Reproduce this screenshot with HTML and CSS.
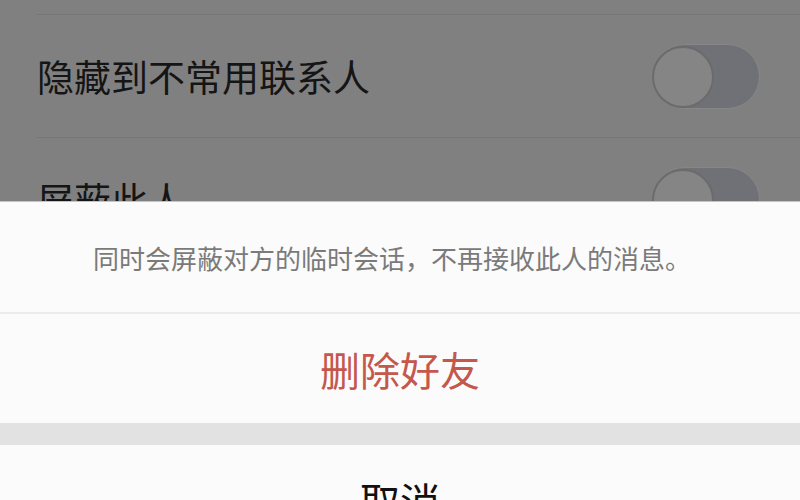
FILE: index.html
```html
<!DOCTYPE html>
<html lang="zh-CN">
<head>
  <meta charset="UTF-8">
  <meta name="viewport" content="width=device-width, initial-scale=1.0">
  <title>聊天设置</title>
  <link rel="stylesheet" href="styles.css">
</head>
<body>
  <div class="settings">
    <div class="setting-row setting-top"></div>
    <div class="setting-row">
      <span class="setting-label">隐藏到不常用联系人</span>
      <span class="switch"><span class="knob"></span></span>
    </div>
    <div class="setting-row">
      <span class="setting-label">屏蔽此人</span>
      <span class="switch"><span class="knob"></span></span>
    </div>
  </div>

  <div class="action-sheet">
    <div class="sheet-message">同时会屏蔽对方的临时会话，不再接收此人的消息。</div>
    <div class="sheet-action danger">删除好友</div>
    <div class="sheet-gap"></div>
    <div class="sheet-action">取消</div>
  </div>
</body>
</html>
```

FILE: styles.css
```css
body {
  font-family: "Noto Sans CJK SC", "Noto Sans", sans-serif;
  margin: 0;
  padding: 0;
  width: 800px;
  height: 500px;
  overflow: hidden;
  background: #808080;
  display: flex;
  flex-direction: column;
}

/* dimmed settings list, cut off by the sheet */
.settings {
  height: 201px;
  flex-shrink: 0;
  overflow: hidden;
  padding-left: 36px;
}
.setting-row {
  height: 122px;
  display: flex;
  align-items: center;
  justify-content: space-between;
  padding-right: 40px;
  border-bottom: 1px solid #777;
}
.setting-top {
  height: 14px;
}
.setting-label {
  font-size: 37px;
  color: #151515;
  padding-left: 1px;
}
.switch {
  width: 108px;
  height: 65px;
  box-sizing: border-box;
  border-radius: 33px;
  background: #707176;
  border: 1px solid #878787;
  position: relative;
}
.knob {
  position: absolute;
  left: -1px;
  top: 1px;
  width: 62px;
  height: 62px;
  box-sizing: border-box;
  border-radius: 50%;
  background: #858585;
  border: 2px solid #6b6b6b;
}

.action-sheet {
  flex-shrink: 0;
  background: #fbfbfb;
  border-top: 1px solid #c4c4c4;
}
.sheet-message {
  height: 110px;
  display: flex;
  align-items: center;
  justify-content: center;
  padding-right: 16px;
  font-size: 26px;
  color: #7a7a7a;
  border-bottom: 2px solid #ebebeb;
}
.sheet-action {
  height: 109px;
  display: flex;
  align-items: center;
  justify-content: center;
  font-size: 40px;
  color: #111;
}
.sheet-action.danger {
  color: #c4584c;
}
.sheet-gap {
  height: 22px;
  background: #e2e2e2;
}
```
